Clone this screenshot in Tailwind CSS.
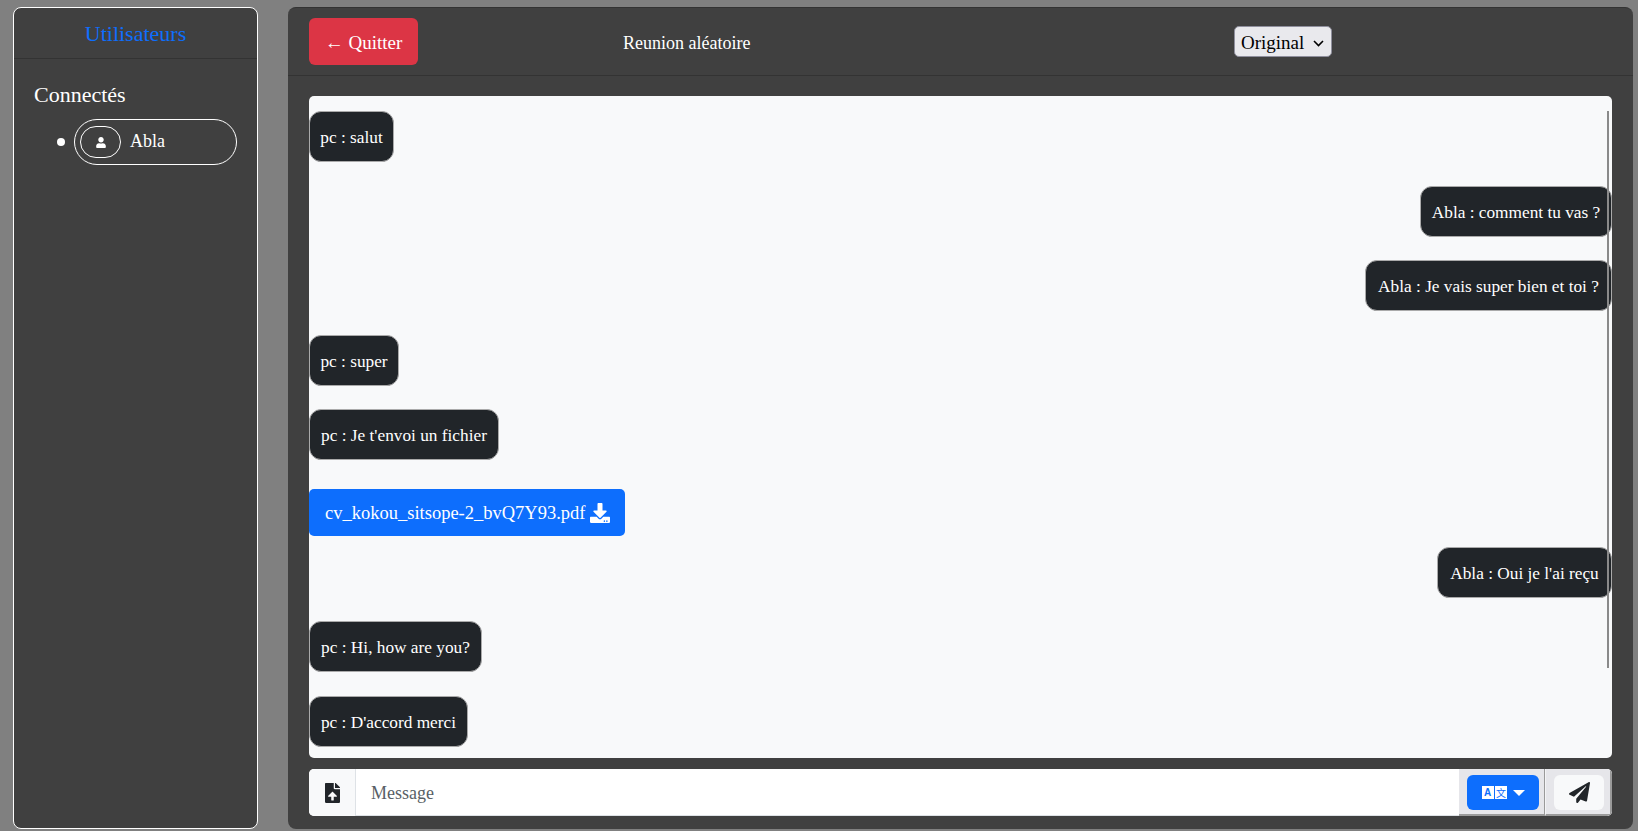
<!DOCTYPE html>
<html lang="fr">
<head>
<meta charset="UTF-8">
<title>Reunion aléatoire</title>
<script src="https://cdn.jsdelivr.net/npm/@tailwindcss/browser@4"></script>
</head>
<body class="bg-[#808080] font-['Liberation_Serif',serif] text-white overflow-hidden">
<div class="flex h-[831px] w-[1638px] pt-[7px] pb-[2px] pl-[13px] pr-[6px] gap-[30px]">

  <!-- users -->
  <aside class="w-[245px] shrink-0 bg-[#404040] border border-white rounded-lg">
    <div class="h-[51px] border-b border-[#333] flex items-center justify-center pt-[2px]">
      <h5 class="text-[#0d6efd] text-[22px] leading-none">Utilisateurs</h5>
    </div>
    <div class="pt-[21px] pl-[20px]">
      <h5 class="text-[22px] leading-[30px]">Connectés</h5>
      <ul class="mt-[9px]">
        <li class="flex items-center">
          <span class="w-[8px] h-[8px] rounded-full bg-white ml-[23px] mr-[9px]"></span>
          <div class="w-[163px] h-[46px] rounded-full border border-white flex items-center pl-[5px]">
            <span class="w-[41px] h-[32px] rounded-full border border-white flex items-center justify-center">
              <svg class="w-[10px] h-[11px]" viewBox="0 0 448 512" fill="#fff"><path d="M224 256c70.700 0 128-57.300 128-128S294.700 0 224 0 96 57.300 96 128s57.300 128 128 128zm89.600 32h-16.700c-22.200 10.200-46.900 16-72.900 16s-50.600-5.800-72.900-16h-16.700C60.200 288 0 348.200 0 422.400V464c0 26.500 21.500 48 48 48h352c26.500 0 48-21.500 48-48v-41.600c0-74.200-60.200-134.400-134.400-134.400z"/></svg>
            </span>
            <span class="ml-[9px] text-[18px] pb-[2px]">Abla</span>
          </div>
        </li>
      </ul>
    </div>
  </aside>

  <!-- chat -->
  <main class="flex-1 bg-[#404040] rounded-lg border-t border-[#333] flex flex-col">
    <header class="h-[68px] shrink-0 border-b border-[#333] flex items-center pl-[21px]">
      <button class="w-[109px] h-[47px] rounded-md bg-[#dc3545] text-[19px] flex items-center justify-center pt-[3px]">← Quitter</button>
      <span class="ml-[205px] w-[611px] text-[18px] pt-[3px]">Reunion aléatoire</span>
      <div class="w-[98px] h-[31px] rounded-[5px] bg-[#e9e9ed] border border-[#8f8f9d] text-black text-[19px] flex items-center pl-[6px] gap-[9px] pt-[3px]">
        Original
        <svg class="w-[11px] h-[7px]" viewBox="0 0 11 7" fill="none" stroke="#000" stroke-width="1.6"><path d="M1 1l4.500 4.500L10 1"/></svg>
      </div>
    </header>

    <section class="relative mt-[20px] mx-[21px] w-[1303px] h-[662px] shrink-0 bg-[#f8f9fa] rounded-[5px] pt-[15px] flex flex-col">
      <div class="absolute right-[3px] top-[15px] w-[2px] h-[557px] bg-[#8a8a8a]"></div>
      <div class="self-start w-[85px] h-[51px] bg-[#212529] border border-[#aaa] rounded-xl flex items-center justify-center text-[17.300px] pt-[3px]">pc : salut</div>
      <div class="self-end w-[192px] h-[51px] mt-[24px] bg-[#212529] border border-[#aaa] rounded-xl flex items-center justify-center text-[17.300px] pt-[3px]">Abla : comment tu vas ?</div>
      <div class="self-end w-[247px] h-[51px] mt-[23px] bg-[#212529] border border-[#aaa] rounded-xl flex items-center justify-center text-[17.300px] pt-[3px]">Abla : Je vais super bien et toi ?</div>
      <div class="self-start w-[90px] h-[51px] mt-[24px] bg-[#212529] border border-[#aaa] rounded-xl flex items-center justify-center text-[17.300px] pt-[3px]">pc : super</div>
      <div class="self-start w-[190px] h-[51px] mt-[23px] bg-[#212529] border border-[#aaa] rounded-xl flex items-center justify-center text-[17.300px] pt-[3px]">pc : Je t'envoi un fichier</div>
      <a class="self-start w-[316px] h-[47px] mt-[29px] bg-[#0d6efd] rounded-[5px] flex items-center pl-[16px] gap-[4px] text-[18.500px]">
        <span class="pt-[2px]">cv_kokou_sitsope-2_bvQ7Y93.pdf</span>
        <svg class="w-[20px] h-[20px]" viewBox="0 0 512 512" fill="#fff"><path d="M216 0h80c13.300 0 24 10.700 24 24v168h87.700c17.800 0 26.700 21.500 14.100 34.100L269.700 378.300c-7.500 7.500-19.800 7.500-27.300 0L90.100 226.100c-12.600-12.600-3.700-34.100 14.100-34.100H192V24c0-13.300 10.700-24 24-24zm296 376v112c0 13.300-10.700 24-24 24H24c-13.300 0-24-10.700-24-24V376c0-13.300 10.700-24 24-24h146.700l49 49c20.100 20.100 52.500 20.100 72.600 0l49-49H488c13.300 0 24 10.700 24 24zm-124 88c0-11-9-20-20-20s-20 9-20 20 9 20 20 20 20-9 20-20zm64 0c0-11-9-20-20-20s-20 9-20 20 9 20 20 20 20-9 20-20z"/></svg>
      </a>
      <div class="self-end w-[175px] h-[51px] mt-[11px] bg-[#212529] border border-[#aaa] rounded-xl flex items-center justify-center text-[17.300px] pt-[3px]">Abla : Oui je l'ai reçu</div>
      <div class="self-start w-[173px] h-[51px] mt-[23px] bg-[#212529] border border-[#aaa] rounded-xl flex items-center justify-center text-[17.300px] pt-[3px]">pc : Hi, how are you?</div>
      <div class="self-start w-[159px] h-[51px] mt-[24px] bg-[#212529] border border-[#aaa] rounded-xl flex items-center justify-center text-[17.300px] pt-[3px]">pc : D'accord merci</div>
    </section>

    <footer class="mt-[11px] mx-[21px] w-[1303px] h-[47px] shrink-0 flex rounded-[5px] overflow-hidden bg-white">
      <div class="w-[47px] bg-[#f8f9fa] border-r border-[#dee2e6] flex items-center justify-center">
        <svg class="w-[15px] h-[20px]" viewBox="0 0 384 512" fill="#212529"><path d="M224 136V0H24C10.700 0 0 10.700 0 24v464c0 13.300 10.700 24 24 24h336c13.300 0 24-10.700 24-24V160H248c-13.200 0-24-10.800-24-24zm65.180 216.010H224v80c0 8.840-7.160 16-16 16h-32c-8.840 0-16-7.160-16-16v-80H94.820c-14.280 0-21.410-17.290-11.250-27.360l96.420-95.700c6.650-6.610 17.390-6.610 24.040 0l96.420 95.700c10.150 10.070 3.030 27.360-11.250 27.360zM377 105L279.100 7c-4.500-4.500-10.600-7-17-7H256v128h128v-6.100c0-6.300-2.500-12.400-7-16.900z"/></svg>
      </div>
      <div class="flex-1 flex items-center pl-[15px] pt-[2px] text-[#595f66] text-[18px] border-b border-[#dee2e6]">Message</div>
      <div class="w-[86px] bg-[#e6e6ea] border-r border-b-2 border-[#9a9a9a] pl-[8px] pt-[6px]">
        <div class="w-[72px] h-[35px] bg-[#0d6efd] rounded-md flex items-center justify-center gap-[1.500px]">
          <span class="w-[12px] h-[13px] bg-white text-[#0d6efd] text-[10px] leading-[13px] text-center font-bold font-['Liberation_Sans',sans-serif]">A</span>
          <span class="w-[12px] h-[13px] bg-white text-[#0d6efd] text-[10px] leading-[13px] text-center font-['Noto_Sans_CJK_SC',sans-serif]">文</span>
          <span class="ml-[4px] w-0 h-0 border-x-[6px] border-x-transparent border-t-[6px] border-t-white"></span>
        </div>
      </div>
      <div class="w-[67px] bg-[#e6e6ea] border-l border-l-[#f4f4f6] border-r-2 border-b-2 border-r-[#9a9a9a] border-b-[#9a9a9a] pl-[8px] pt-[6px]">
        <div class="w-[50px] h-[35px] bg-[#f8f9fa] rounded-md flex items-center justify-center">
          <svg class="w-[21px] h-[21px]" viewBox="0 0 512 512" fill="#212529"><path d="M476 3.200L12.500 270.600c-18.100 10.400-15.800 35.600 2.200 43.200L121 358.400l287.300-253.200c5.500-4.900 13.300 2.600 8.600 8.300L176 407v80.500c0 23.600 28.500 32.900 42.500 15.800L282 426l124.600 52.200c14.200 6 30.400-2.900 33-18.200l72-432C515 7.800 493.300-6.800 476 3.200z"/></svg>
        </div>
      </div>
    </footer>
  </main>
</div>
</body>
</html>
